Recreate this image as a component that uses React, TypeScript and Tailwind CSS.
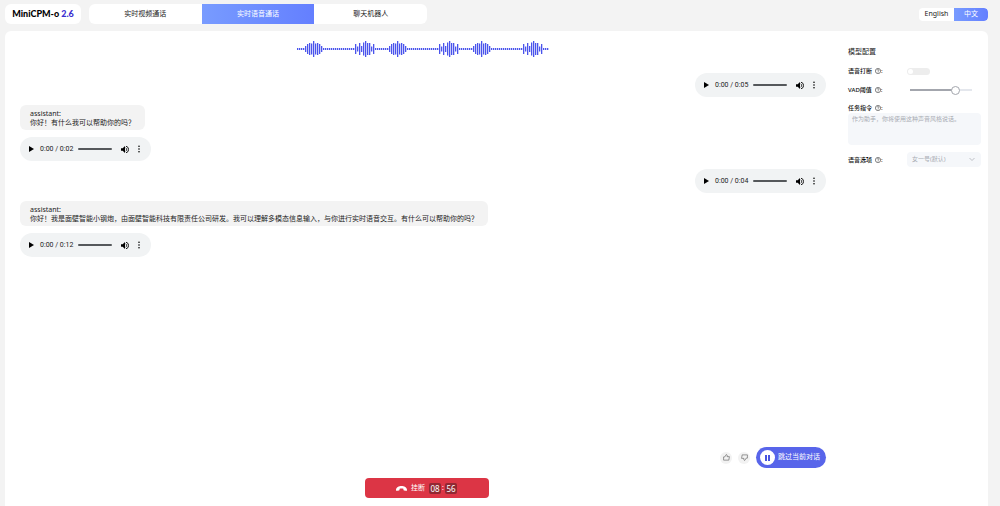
import { useState } from "react";

const tabs = ["实时视频通话", "实时语音通话", "聊天机器人"];

const messages = [
  { role: "user", duration: "0:05" },
  { role: "assistant", text: "你好！有什么我可以帮助你的吗？", duration: "0:02" },
  { role: "user", duration: "0:04" },
  {
    role: "assistant",
    text: "你好！我是面壁智能小钢炮，由面壁智能科技有限责任公司研发。我可以理解多模态信息输入，与你进行实时语音交互。有什么可以帮助你的吗？",
    duration: "0:12",
  },
];

// one period of the wave, repeated three times
const wave = [
  2, 2, 2, 2, 6, 10, 12, 11, 16, 11, 12, 10, 6, 2, 2, 2, 2, 2, 2, 2, 2, 2, 2, 2, 2, 2, 2, 2, 2,
  10, 5, 12, 6, 13, 16, 12, 12, 5, 10, 2, 2, 2,
];
const bars = [...wave, ...wave, ...wave];

function VoiceWave() {
  return (
    <svg className="mx-auto h-4 w-[254px]" viewBox="0 0 254 16" aria-hidden="true">
      {bars.map((h, i) => (
        <rect key={i} x={i * 2 + 1} y={8 - h / 2} width="1.3" height={h} fill="#4a54ec" />
      ))}
    </svg>
  );
}

function AudioPlayer({ duration }: { duration: string }) {
  return (
    <div className="flex h-6 w-[131px] items-center rounded-full bg-[#f1f3f4] px-2 text-black">
      <button aria-label="播放" className="flex w-3 justify-start">
        <svg className="h-2 w-2" viewBox="0 0 8 8" fill="currentColor">
          <path d="M1 1v6l5-3z" />
        </svg>
      </button>
      <span className="w-[38px] whitespace-nowrap font-['Roboto',sans-serif] text-[7px] leading-3 text-[#222]">
        0:00 / {duration}
      </span>
      <span className="h-0.5 w-[34px] rounded-full bg-[#55585b]" />
      <button aria-label="音量" className="ml-2 flex w-[17px] shrink-0">
        <svg className="h-[9px] w-[9px]" viewBox="0 0 9 9">
          <path d="M1 3.2v2.6h1.7L5 8V1L2.7 3.2z" fill="currentColor" />
          <path
            d="M5.7 2.9a1.8 1.8 0 0 1 0 3.2M6 1.2a3.4 3.4 0 0 1 0 6.6"
            fill="none"
            stroke="currentColor"
            strokeWidth="0.9"
          />
        </svg>
      </button>
      <button aria-label="更多" className="flex">
        <svg className="h-2 w-1" viewBox="0 0 4 8" fill="currentColor">
          <circle cx="2" cy="1.2" r="0.8" />
          <circle cx="2" cy="4" r="0.8" />
          <circle cx="2" cy="6.8" r="0.8" />
        </svg>
      </button>
    </div>
  );
}

function HelpIcon() {
  return (
    <svg className="h-1.5 w-1.5" viewBox="0 0 24 24" fill="none" stroke="#444" strokeWidth="2.5">
      <circle cx="12" cy="12" r="10.5" />
      <path d="M8.5 9.5a3.5 3.5 0 1 1 5 3.2c-1 .5-1.5 1-1.5 2.3M12 17v2" />
    </svg>
  );
}

function FieldLabel({ htmlFor, text }: { htmlFor: string; text: string }) {
  return (
    <label htmlFor={htmlFor} className="flex w-[59px] shrink-0 items-center text-[6px] font-medium leading-[10px] text-[#111]">
      <span className="mr-[3px]">{text}</span>
      <HelpIcon />
      <span>:</span>
    </label>
  );
}

function Thumb({ down = false }: { down?: boolean }) {
  return (
    <button
      aria-label={down ? "踩" : "赞"}
      className="flex h-3 w-3 items-center justify-center rounded-full bg-[#f2f2f2]"
    >
      <svg
        className={down ? "h-[7px] w-[7px] rotate-180" : "h-[7px] w-[7px]"}
        viewBox="0 0 24 24"
        fill="none"
        stroke="#555"
        strokeWidth="2"
        strokeLinejoin="round"
      >
        <path d="M2 10h4l5-8c2 0 3.5 1.5 3.500 3.500L14 9h8l-2 12H2z" />
      </svg>
    </button>
  );
}

function ConfigPanel() {
  const [threshold, setThreshold] = useState(78);

  return (
    <aside className="w-[140px] shrink-0 pr-[7px] pt-4">
      <h2 className="text-[7px] leading-[10px] text-[#222]">模型配置</h2>
      <div className="mt-[9px] flex items-center">
        <FieldLabel htmlFor="interrupt" text="语音打断" />
        <input
          id="interrupt"
          type="checkbox"
          role="switch"
          className="h-[7px] w-[23px] appearance-none rounded-full bg-[#ededed] before:block before:h-[5px] before:w-[5px] before:translate-x-px before:translate-y-px before:rounded-full before:bg-white"
        />
      </div>
      <div className="mt-[9px] flex items-center">
        <FieldLabel htmlFor="vad" text="VAD阈值" />
        <input
          id="vad"
          type="range"
          value={threshold}
          onChange={(e) => setThreshold(Number(e.target.value))}
          className="ml-[3px] h-[9px] w-[62px] appearance-none bg-[linear-gradient(to_right,#a3a6ad_75%,#e4e7ed_75%)] bg-[length:100%_2px] bg-center bg-no-repeat [&::-webkit-slider-thumb]:h-[9px] [&::-webkit-slider-thumb]:w-[9px] [&::-webkit-slider-thumb]:appearance-none [&::-webkit-slider-thumb]:rounded-full [&::-webkit-slider-thumb]:border [&::-webkit-slider-thumb]:border-[#a3a6ad] [&::-webkit-slider-thumb]:bg-white"
        />
      </div>
      <div className="mt-2">
        <FieldLabel htmlFor="prompt" text="任务指令" />
        <textarea
          id="prompt"
          disabled
          defaultValue="作为助手，你将使用这种声音风格说话。"
          className="block h-8 w-full resize-none rounded-sm bg-[#f5f7fa] px-1 py-px text-[6px] leading-[10px] text-[#a8abb2]"
        />
      </div>
      <div className="mt-[7px] flex items-center">
        <FieldLabel htmlFor="voice" text="语音选项" />
        <div className="relative flex-1">
          <select
            id="voice"
            disabled
            className="block h-[15px] w-full appearance-none rounded-sm bg-[#f5f7fa] px-[5px] text-[6px] text-[#a8abb2] opacity-100"
          >
            <option>女一号(默认)</option>
          </select>
          <svg
            className="pointer-events-none absolute right-1.5 top-1 h-1.5 w-1.5"
            viewBox="0 0 6 6"
            fill="none"
            stroke="#b0b3b9"
            strokeWidth="0.8"
          >
            <path d="M.5 2 3 4.5 5.5 2" />
          </svg>
        </div>
      </div>
    </aside>
  );
}

export default function App() {
  const [tab, setTab] = useState(1);

  return (
    <div className="flex min-h-screen flex-col bg-[#f3f3f3] pl-[5px] pr-3 pt-1 font-['Noto_Sans','Noto_Sans_CJK_SC',sans-serif] text-[#222]">
      <header className="flex h-5 items-start gap-2">
        <h1 className="flex h-5 w-[76px] items-center justify-center gap-0.5 whitespace-nowrap rounded-md bg-white font-['Lato',sans-serif] text-[9px] font-black text-black">
          MiniCPM-o <span className="text-[#3b2fd0]">2.6</span>
        </h1>
        <nav className="flex h-5 w-[338px] overflow-hidden rounded-md bg-white text-[7px]">
          {tabs.map((label, i) => (
            <button
              key={label}
              onClick={() => setTab(i)}
              className={
                i === tab
                  ? "flex-1 bg-linear-to-r from-[#789bff] to-[#647fff] text-white"
                  : "flex-1 text-[#222]"
              }
            >
              {label}
            </button>
          ))}
        </nav>
        <div className="ml-auto mt-1 flex h-[13px] overflow-hidden rounded-sm bg-white text-[7px]">
          <button className="w-[35px] text-[#222]">English</button>
          <button className="w-[34px] rounded-r-sm bg-linear-to-r from-[#789bff] to-[#647fff] text-white">中文</button>
        </div>
      </header>

      <main className="mt-[7px] flex flex-1 rounded-t-md bg-white">
        <section className="flex min-w-0 flex-1 flex-col pb-2 pt-[10px]">
          <div className="flex flex-1 flex-col pl-[15px] pr-[22px]">
            <VoiceWave />
            <div className="mt-4 flex flex-col gap-2">
              {messages.map((m, i) => (
                <div
                  key={i}
                  className={m.role === "user" ? "flex flex-col items-end" : "flex flex-col items-start gap-[7px]"}
                >
                  {m.text && (
                    <div className="rounded-md bg-[#f3f3f3] px-[10px] pb-[3px] pt-1 text-[7px] leading-[9px] text-[#222]">
                      <div>assistant:</div>
                      <p>{m.text}</p>
                    </div>
                  )}
                  <AudioPlayer duration={m.duration} />
                </div>
              ))}
            </div>
            <div className="mt-auto flex items-center justify-end gap-1.5">
              <Thumb />
              <Thumb down />
              <button className="flex h-[21px] w-[70px] items-center gap-[3px] whitespace-nowrap rounded-full bg-[#5865ea] pl-1 text-[7px] text-white">
                <span className="flex h-[15px] w-[15px] shrink-0 items-center justify-center gap-px rounded-full bg-white">
                  <span className="h-1.5 w-0.5 bg-[#4854e0]" />
                  <span className="h-1.5 w-0.5 bg-[#4854e0]" />
                </span>
                跳过当前对话
              </button>
            </div>
          </div>
          <button className="mx-auto mt-[10px] flex h-5 w-[124px] items-center justify-center rounded-sm bg-[#dc3545] text-[7px] text-white">
            <svg className="mr-1 h-[5px] w-[11px]" viewBox="0 0 22 10" fill="currentColor">
              <path d="M11 0C6 0 0 3 0 7.5 0 10 1 10 2.5 9.7L6 9c1-.3 1.2-1 1.2-3.5 2.5-.8 5-.8 7.6 0 0 2.5.2 3.2 1.2 3.5l3.5.7c1.5.3 2.5.3 2.5-2.2C22 3 16 0 11 0z" />
            </svg>
            挂断
            <span className="ml-1 w-3 rounded-xs bg-[#912832] text-center text-[8px] leading-[11px]">08</span>
            <span className="w-1 text-center">:</span>
            <span className="w-3 rounded-xs bg-[#912832] text-center text-[8px] leading-[11px]">56</span>
          </button>
        </section>
        <ConfigPanel />
      </main>
    </div>
  );
}
